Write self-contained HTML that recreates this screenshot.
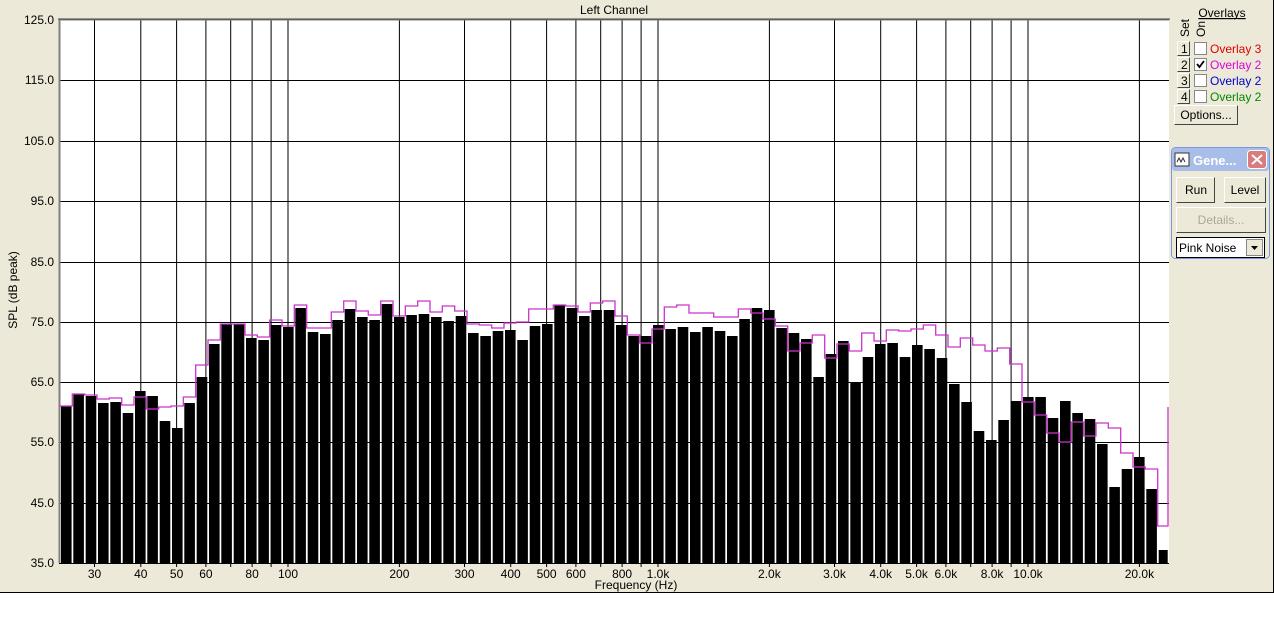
<!DOCTYPE html>
<html><head><meta charset="utf-8"><style>
html,body{margin:0;padding:0;background:#fff;}
svg{display:block;font-family:"Liberation Sans",Arial,sans-serif;}
</style></head><body>
<svg width="1274" height="637" viewBox="0 0 1274 637" xmlns="http://www.w3.org/2000/svg">
<rect x="0" y="0" width="1274" height="593" fill="#ece9d8"/>
<line x1="0" y1="592.5" x2="1274" y2="592.5" stroke="#000"/>
<line x1="1273.5" y1="0" x2="1273.5" y2="593" stroke="#000"/>
<text x="614" y="14" font-size="12" text-anchor="middle">Left Channel</text>
<!-- plot -->
<rect x="59" y="19" width="1110" height="544" fill="#fff"/>
<g stroke="#000" stroke-width="1">
<path d="M94.5 20V563M140.8 20V563M176.6 20V563M205.9 20V563M230.7 20V563M252.1 20V563M271.1 20V563M288 20V563M399.4 20V563M464.5 20V563M510.7 20V563M546.6 20V563M575.9 20V563M600.7 20V563M622.1 20V563M641.1 20V563M658 20V563M769.4 20V563M834.5 20V563M880.7 20V563M916.6 20V563M945.9 20V563M970.7 20V563M992.1 20V563M1011.1 20V563M1028 20V563M1139.4 20V563"/>
<path d="M59 80.5H1169M59 141.5H1169M59 201.5H1169M59 262.5H1169M59 322.5H1169M59 382.5H1169M59 442.5H1169M59 503.5H1169M59 563.5H1169"/>
</g>
<path d="M59.5 563V19.5H1169" stroke="#808080" stroke-width="2" fill="none"/>
<path d="M58 19H1170" stroke="#404040" stroke-width="1" fill="none"/>
<g fill="#000">
<rect x="61" y="406" width="10.6" height="157"/><rect x="73.3" y="394" width="10.6" height="169"/><rect x="85.7" y="396" width="10.6" height="167"/><rect x="98" y="403" width="10.6" height="160"/><rect x="110.3" y="402" width="10.6" height="161"/><rect x="122.7" y="413" width="10.6" height="150"/><rect x="135" y="391" width="10.6" height="172"/><rect x="147.3" y="396" width="10.6" height="167"/><rect x="159.7" y="421" width="10.6" height="142"/><rect x="172" y="428" width="10.6" height="135"/>
<rect x="184.3" y="403" width="10.6" height="160"/><rect x="196.7" y="377" width="10.6" height="186"/><rect x="209" y="344" width="10.6" height="219"/><rect x="221.3" y="324" width="10.6" height="239"/><rect x="233.7" y="324" width="10.6" height="239"/><rect x="246" y="338" width="10.6" height="225"/><rect x="258.3" y="340" width="10.6" height="223"/><rect x="270.7" y="325" width="10.6" height="238"/><rect x="283" y="327" width="10.6" height="236"/><rect x="295.3" y="308" width="10.6" height="255"/>
<rect x="307.7" y="332" width="10.6" height="231"/><rect x="320" y="334" width="10.6" height="229"/><rect x="332.3" y="320" width="10.6" height="243"/><rect x="344.7" y="309" width="10.6" height="254"/><rect x="357" y="317" width="10.6" height="246"/><rect x="369.3" y="320" width="10.6" height="243"/><rect x="381.7" y="304" width="10.6" height="259"/><rect x="394" y="317" width="10.6" height="246"/><rect x="406.3" y="315" width="10.6" height="248"/><rect x="418.7" y="314" width="10.6" height="249"/>
<rect x="431" y="317" width="10.6" height="246"/><rect x="443.3" y="321" width="10.6" height="242"/><rect x="455.7" y="316" width="10.6" height="247"/><rect x="468" y="333" width="10.6" height="230"/><rect x="480.3" y="336" width="10.6" height="227"/><rect x="492.7" y="331" width="10.6" height="232"/><rect x="505" y="330" width="10.6" height="233"/><rect x="517.3" y="340" width="10.6" height="223"/><rect x="529.7" y="326" width="10.6" height="237"/><rect x="542" y="324" width="10.6" height="239"/>
<rect x="554.3" y="305" width="10.6" height="258"/><rect x="566.7" y="308" width="10.6" height="255"/><rect x="579" y="316" width="10.6" height="247"/><rect x="591.3" y="310" width="10.6" height="253"/><rect x="603.7" y="310" width="10.6" height="253"/><rect x="616" y="325" width="10.6" height="238"/><rect x="628.3" y="336" width="10.6" height="227"/><rect x="640.7" y="336" width="10.6" height="227"/><rect x="653" y="325" width="10.6" height="238"/><rect x="665.3" y="329" width="10.6" height="234"/>
<rect x="677.7" y="327" width="10.6" height="236"/><rect x="690" y="332" width="10.6" height="231"/><rect x="702.3" y="327" width="10.6" height="236"/><rect x="714.7" y="331" width="10.6" height="232"/><rect x="727" y="336" width="10.6" height="227"/><rect x="739.3" y="319" width="10.6" height="244"/><rect x="751.7" y="308" width="10.6" height="255"/><rect x="764" y="310" width="10.6" height="253"/><rect x="776.3" y="328" width="10.6" height="235"/><rect x="788.7" y="333" width="10.6" height="230"/>
<rect x="801" y="339" width="10.6" height="224"/><rect x="813.3" y="377" width="10.6" height="186"/><rect x="825.7" y="354" width="10.6" height="209"/><rect x="838" y="341" width="10.6" height="222"/><rect x="850.3" y="383" width="10.6" height="180"/><rect x="862.7" y="357" width="10.6" height="206"/><rect x="875" y="344" width="10.6" height="219"/><rect x="887.3" y="343" width="10.6" height="220"/><rect x="899.7" y="357" width="10.6" height="206"/><rect x="912" y="345" width="10.6" height="218"/>
<rect x="924.3" y="349" width="10.6" height="214"/><rect x="936.7" y="358" width="10.6" height="205"/><rect x="949" y="384" width="10.6" height="179"/><rect x="961.3" y="402" width="10.6" height="161"/><rect x="973.7" y="431" width="10.6" height="132"/><rect x="986" y="440" width="10.6" height="123"/><rect x="998.3" y="420" width="10.6" height="143"/><rect x="1010.7" y="401" width="10.6" height="162"/><rect x="1023" y="397" width="10.6" height="166"/><rect x="1035.3" y="397" width="10.6" height="166"/>
<rect x="1047.7" y="418" width="10.6" height="145"/><rect x="1060" y="401" width="10.6" height="162"/><rect x="1072.3" y="413" width="10.6" height="150"/><rect x="1084.7" y="419" width="10.6" height="144"/><rect x="1097" y="444" width="10.6" height="119"/><rect x="1109.3" y="487" width="10.6" height="76"/><rect x="1121.7" y="469" width="10.6" height="94"/><rect x="1134" y="457" width="10.6" height="106"/><rect x="1146.3" y="489" width="10.6" height="74"/><rect x="1158.7" y="550" width="9" height="13"/>
</g>
<path fill="none" stroke="#cc33cc" stroke-width="1.3" d="M59 406 H72.3 V394 H84.7 V395 H97 V399 H109.3 V398 H121.7 V405 H134 V397 H146.3 V409 H158.7 V407 H171 V406 H183.3 V397 H195.7 V365 H208 V340 H220.3 V324 H232.7 V324 H245 V335 H257.3 V337 H269.7 V320 H282 V326 H294.3 V305 H306.7 V328 H319 V328 H331.3 V312 H343.7 V301 H356 V311 H368.3 V315 H380.7 V301 H393 V316 H405.3 V306 H417.7 V301 H430 V312 H442.3 V306 H454.7 V311 H467 V324 H479.3 V325 H491.7 V328 H504 V323 H516.3 V322 H528.7 V309 H541 V309 H553.3 V305 H565.7 V306 H578 V312 H590.3 V303 H602.7 V301 H615 V316 H627.3 V335 H639.7 V343 H652 V329 H664.3 V307 H676.7 V305 H689 V313 H701.3 V313 H713.7 V317 H726 V317 H738.3 V309 H750.7 V313 H763 V319 H775.3 V326 H787.7 V351 H800 V343 H812.3 V335 H824.7 V358 H837 V344 H849.3 V351 H861.7 V333 H874 V341 H886.3 V330 H898.7 V331 H911 V329 H923.3 V325 H935.7 V335 H948 V347 H960.3 V338 H972.7 V345 H985 V351 H997.3 V348 H1009.7 V364 H1022 V402 H1034.3 V415 H1046.7 V433 H1059 V442 H1071.3 V422 H1083.7 V436 H1096 V423 H1108.3 V428 H1120.7 V453 H1133 V467 H1145.3 V469 H1157.7 V526 H1168 V407"/>
<!-- y labels -->
<g font-size="12" text-anchor="end">
<text x="54" y="24">125.0</text><text x="54" y="84">115.0</text><text x="54" y="145">105.0</text><text x="54" y="205">95.0</text><text x="54" y="266">85.0</text><text x="54" y="326">75.0</text><text x="54" y="386">65.0</text><text x="54" y="446">55.0</text><text x="54" y="507">45.0</text><text x="54" y="567">35.0</text>
</g>
<text x="17" y="290" font-size="12" text-anchor="middle" transform="rotate(-90 17 290)">SPL (dB peak)</text>
<g font-size="12" text-anchor="middle">
<text x="94.5" y="578">30</text><text x="140.8" y="578">40</text><text x="176.6" y="578">50</text><text x="205.9" y="578">60</text><text x="252.1" y="578">80</text><text x="288" y="578">100</text><text x="399.4" y="578">200</text><text x="464.5" y="578">300</text><text x="510.7" y="578">400</text><text x="546.6" y="578">500</text><text x="575.9" y="578">600</text><text x="622.1" y="578">800</text><text x="658" y="578">1.0k</text><text x="769.4" y="578">2.0k</text><text x="834.5" y="578">3.0k</text><text x="880.7" y="578">4.0k</text><text x="916.6" y="578">5.0k</text><text x="945.9" y="578">6.0k</text><text x="992.1" y="578">8.0k</text><text x="1028" y="578">10.0k</text><text x="1139.4" y="578">20.0k</text>
<text x="636" y="589">Frequency (Hz)</text>
</g>
<g stroke="#000"><path d="M94.5 563V567M140.8 563V567M176.6 563V567M205.9 563V567M230.7 563V567M252.1 563V567M271.1 563V567M288 563V567M399.4 563V567M464.5 563V567M510.7 563V567M546.6 563V567M575.9 563V567M600.7 563V567M622.1 563V567M641.1 563V567M658 563V567M769.4 563V567M834.5 563V567M880.7 563V567M916.6 563V567M945.9 563V567M970.7 563V567M992.1 563V567M1011.1 563V567M1028 563V567M1139.4 563V567"/></g>
<!-- right panel -->
<text x="1222" y="17" font-size="12" text-anchor="middle" text-decoration="underline">Overlays</text>
<line x1="1199" y1="18.5" x2="1245" y2="18.5" stroke="#000"/>
<text x="1189" y="28" font-size="12" text-anchor="middle" transform="rotate(-90 1189 28)">Set</text>
<text x="1205" y="29" font-size="12" text-anchor="middle" transform="rotate(-90 1205 29)">On</text>
<g font-size="12">
<g>
<rect x="1177.5" y="41.5" width="12" height="14" fill="#ece9d8" stroke="#fff"/><path d="M1177.5 55.5H1189.5V41.5" stroke="#444" fill="none"/><text x="1181" y="53">1</text>
<rect x="1194.5" y="42.5" width="12" height="12" fill="#fff" stroke="#888"/>
<text x="1210" y="53" fill="#e00000">Overlay 3</text>
</g>
<g>
<rect x="1177.5" y="57.5" width="12" height="14" fill="#ece9d8" stroke="#fff"/><path d="M1177.5 71.5H1189.5V57.5" stroke="#444" fill="none"/><text x="1181" y="69">2</text>
<rect x="1194.5" y="58.5" width="12" height="12" fill="#fff" stroke="#888"/>
<path d="M1197 64l2.5 3 4.5-6" stroke="#000" stroke-width="1.8" fill="none"/>
<text x="1210" y="69" fill="#dd00dd">Overlay 2</text>
</g>
<g>
<rect x="1177.5" y="73.5" width="12" height="14" fill="#ece9d8" stroke="#fff"/><path d="M1177.5 87.5H1189.5V73.5" stroke="#444" fill="none"/><text x="1181" y="85">3</text>
<rect x="1194.5" y="74.5" width="12" height="12" fill="#fff" stroke="#888"/>
<text x="1210" y="85" fill="#0000cc">Overlay 2</text>
</g>
<g>
<rect x="1177.5" y="89.5" width="12" height="14" fill="#ece9d8" stroke="#fff"/><path d="M1177.5 103.5H1189.5V89.5" stroke="#444" fill="none"/><text x="1181" y="101">4</text>
<rect x="1194.5" y="90.5" width="12" height="12" fill="#fff" stroke="#888"/>
<text x="1210" y="101" fill="#008800">Overlay 2</text>
</g>
<rect x="1174.5" y="105.5" width="63" height="19" fill="#ece9d8" stroke="#fff"/><path d="M1174.5 124.5H1237.5V105.5" stroke="#444" fill="none"/>
<text x="1206" y="119" text-anchor="middle">Options...</text>
</g>
<!-- generator window -->
<rect x="1171.5" y="147.5" width="98" height="111" rx="4" fill="#ece9d8" stroke="#7a96df"/>
<rect x="1172" y="148" width="97" height="23" rx="3" fill="#a9bde9"/>
<rect x="1175" y="153" width="14" height="13" fill="#fff" stroke="#333"/>
<path d="M1177 162l2-4 2 4 2-4 2 4" stroke="#333" fill="none"/>
<text x="1193" y="165" font-size="13" font-weight="bold" fill="#fff">Gene...</text>
<rect x="1247.5" y="150.5" width="19" height="18" rx="3" fill="#d97c7c" stroke="#fff"/>
<path d="M1252 155l10 9M1262 155l-10 9" stroke="#fff" stroke-width="2"/>
<g font-size="12">
<rect x="1176.5" y="177.5" width="38" height="25" fill="#ece9d8" stroke="#fff"/><path d="M1176.5 202.5H1214.5V177.5" stroke="#444" fill="none"/>
<text x="1196" y="194" text-anchor="middle">Run</text>
<rect x="1224.5" y="177.5" width="41" height="25" fill="#ece9d8" stroke="#fff"/><path d="M1224.5 202.5H1265.5V177.5" stroke="#444" fill="none"/>
<text x="1245" y="194" text-anchor="middle">Level</text>
<rect x="1176.5" y="207.5" width="89" height="25" fill="#ece9d8" stroke="#fff"/><path d="M1176.5 232.5H1265.5V207.5" stroke="#444" fill="none"/>
<text x="1221" y="224" text-anchor="middle" fill="#aca899">Details...</text>
<rect x="1176.5" y="237.5" width="88" height="20" fill="#fff" stroke="#000"/>
<text x="1179" y="252">Pink Noise</text>
<rect x="1246.5" y="239.5" width="16" height="16" fill="#ece9d8" stroke="#888"/>
<path d="M1251 246h7l-3.5 4z" fill="#000"/>
</g>
</svg>
</body></html>
